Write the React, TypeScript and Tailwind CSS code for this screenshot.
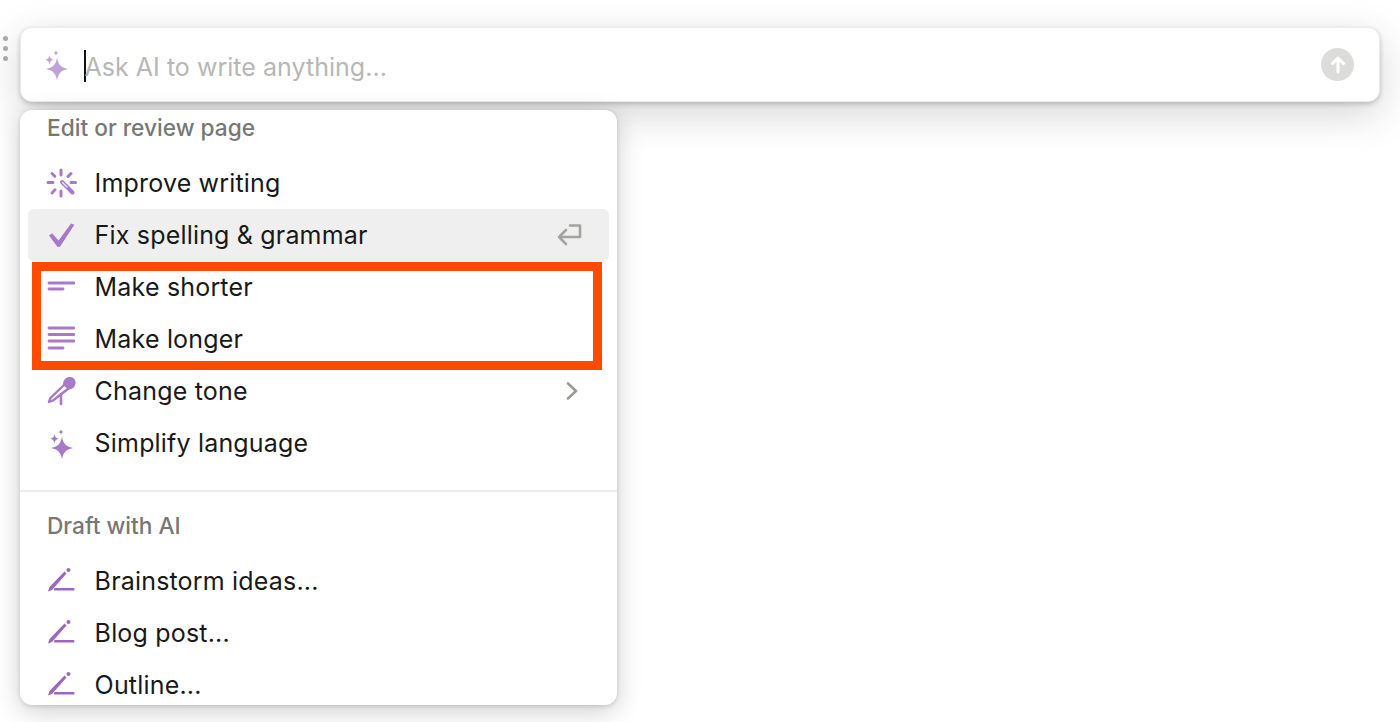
import React from 'react';

const FONT = "font-['Inter','Liberation_Sans',sans-serif]";

const Sparkles = ({ className = '' }: { className?: string }) => (
  <svg viewBox="0 0 28 28" className={`w-7 h-7 overflow-visible ${className}`} fill="currentColor">
    <path d="M15 7.5 C15.9 14 18.5 17.5 26 19 C18.5 20.5 15.9 24 15 30.5 C14.1 24 11.5 20.5 4 19 C11.5 17.5 14.1 14 15 7.5Z" />
    <path d="M7.5 5 C8 8 9 9.2 12 9.8 C9 10.4 8 11.6 7.5 14.6 C7 11.6 6 10.4 3 9.8 C6 9.2 7 8 7.5 5Z" />
    <path d="M14 0 C14.3 2 14.9 2.6 17 3 C14.9 3.4 14.3 4 14 6 C13.7 4 13.1 3.4 11 3 C13.1 2.6 13.7 2 14 0Z" />
  </svg>
);

const WandIcon = () => (
  <svg viewBox="0 0 28 28" className="w-7 h-7 overflow-visible text-[#a67ac9]" fill="none" stroke="currentColor" strokeLinecap="round">
    <path strokeWidth="3" d="M14 1v5M14 22v5M1 13.5h5M24 13.5h4.5M5 4.5l2.8 2.8M24 4.5l-3 3M5 24l3-3.2" />
    <path strokeWidth="4" d="M15 13l10.5 10.5" />
    <path strokeWidth="1.2" stroke="#f4ecf9" d="M15.5 13.5l4.5 4.5" />
  </svg>
);

const CheckIcon = () => (
  <svg viewBox="0 0 28 28" className="w-7 h-7 overflow-visible text-[#a67ac9]" fill="currentColor">
    <path d="M2 14.5 L5 12.2 L11.6 19.4 L24 2.4 L27.4 3.8 L13 25.8 L10.4 25.8Z" />
  </svg>
);

const ShortIcon = () => (
  <svg viewBox="0 0 28 28" className="w-7 h-7 text-[#a67ac9]" fill="none" stroke="currentColor" strokeWidth="2.8" strokeLinecap="round">
    <path d="M2 10h25M2 16h14" />
  </svg>
);

const LongIcon = () => (
  <svg viewBox="0 0 28 28" className="w-7 h-7 text-[#a67ac9]" fill="none" stroke="currentColor" strokeWidth="2.8" strokeLinecap="round">
    <path d="M2 3h25M2 9.5h25M2 16h25M2 23h14" />
  </svg>
);

const MicIcon = () => (
  <svg viewBox="0 0 28 28" className="w-7 h-7 overflow-visible text-[#a67ac9]" fill="none" stroke="currentColor">
    <path fill="currentColor" stroke="none" d="M16 6.5 C16.5 2 20 -0.5 23.5 0 C27 0.5 29 3.5 28.5 6.5 C28 9.5 26 12 22.5 12.5 Z" />
    <path strokeWidth="2.4" strokeLinejoin="round" d="M17.5 7.5 L21.5 11.5 L6 23.5 L2 25 L3.5 21Z" />
    <path strokeWidth="2.6" d="M14 17 V27" strokeLinecap="round" />
  </svg>
);

const PencilIcon = () => (
  <svg viewBox="0 0 28 28" className="w-7 h-7 overflow-visible text-[#9b68bd]" fill="currentColor">
    <path d="M1 24.5 L2.5 20 L17.5 4.5 L19.5 6.5 L5 23Z" />
    <circle cx="21.5" cy="3" r="2" />
    <rect x="7" y="21" width="20.5" height="2.6" rx="1.2" />
  </svg>
);

const EnterIcon = () => (
  <svg viewBox="0 0 26 22" className="w-[26px] h-[22px] text-[#a3a3a0]" fill="none" stroke="currentColor" strokeWidth="2.6" strokeLinecap="round" strokeLinejoin="round">
    <path d="M13 1.5H23V13H2M9 6L2 13L9 20" />
  </svg>
);

const ChevronIcon = () => (
  <svg viewBox="0 0 12 18" className="w-3 h-[18px] text-[#9b9a97]" fill="none" stroke="currentColor" strokeWidth="2.6" strokeLinecap="round" strokeLinejoin="round">
    <path d="M2 1.5L10 9L2 16.5" />
  </svg>
);

const Row = ({ icon, label, active, right }: { icon: React.ReactNode; label: string; active?: boolean; right?: React.ReactNode }) => (
  <div className={`h-[52px] mx-2 pl-[19px] pr-[27px] flex items-center rounded-md shrink-0 ${active ? 'bg-[#efefef]' : ''}`}>
    <span className="w-7 h-7 shrink-0 flex items-center justify-center">{icon}</span>
    <span className="ml-[19.6px] text-[25px] leading-none tracking-[0.18px] text-[#191917] flex-1">{label}</span>
    {right}
  </div>
);

const SectionLabel = ({ children }: { children: React.ReactNode }) => (
  <div className="px-[27px] text-[22.7px] leading-none font-medium text-[#787774]">{children}</div>
);

export default function App() {
  return (
    <div className={`relative h-[722px] overflow-hidden bg-white px-5 pt-[27px] ${FONT}`}>
      {/* drag handle */}
      <div className="absolute left-[2.5px] top-[36px] flex flex-col gap-[5px]">
        <span className="w-[5px] h-[5px] rounded-full bg-[#a8a8a6]" />
        <span className="w-[5px] h-[5px] rounded-full bg-[#a8a8a6]" />
        <span className="w-[5px] h-[5px] rounded-full bg-[#a8a8a6]" />
      </div>

      <div className="h-[75px] bg-white rounded-[12px] border border-[#ececeb] shadow-[0_12px_40px_rgba(0,0,0,0.17),0_2px_5px_rgba(0,0,0,0.2)] flex items-center pl-[21px] pr-[25px]">
        <Sparkles className="text-[#c0a2da] mt-[-1px]" />
        <span className="ml-[14px] mt-[3px] w-[1.5px] h-8 bg-[#111] shrink-0" />
        <span className="-ml-[1px] mt-[5px] text-[25px] leading-none tracking-[0.03px] text-[#b7b7b5] flex-1">Ask AI to write anything...</span>
        <span className="w-[33px] h-[33px] rounded-full bg-[#dcdcda] flex items-center justify-center">
          <svg viewBox="0 0 18 18" className="w-[18px] h-[18px]" fill="none" stroke="white" strokeWidth="3" strokeLinecap="round" strokeLinejoin="round">
            <path d="M9 16V2M3.5 7.5L9 2l5.5 5.5" />
          </svg>
        </span>
      </div>

      <div className="relative mt-2 w-[597px] h-[595px] bg-white rounded-[12px] overflow-hidden shadow-[0_6px_26px_rgba(0,0,0,0.2),0_1px_4px_rgba(0,0,0,0.14)] flex flex-col">
        <div className="h-[47px] pt-[7px] shrink-0">
          <SectionLabel>Edit or review page</SectionLabel>
        </div>
        <Row icon={<WandIcon />} label="Improve writing" />
        <Row icon={<CheckIcon />} label="Fix spelling & grammar" active right={<span className="-mr-px flex"><EnterIcon /></span>} />
        <Row icon={<ShortIcon />} label="Make shorter" />
        <Row icon={<LongIcon />} label="Make longer" />
        <Row icon={<MicIcon />} label="Change tone" right={<span className="mr-1 flex"><ChevronIcon /></span>} />
        <Row icon={<Sparkles className="text-[#a67ac9]" />} label="Simplify language" />
        <div className="mt-[21px] h-[2px] bg-[#ececeb] shrink-0" />
        <div className="h-[63px] pt-[23px] shrink-0">
          <SectionLabel>Draft with AI</SectionLabel>
        </div>
        <Row icon={<PencilIcon />} label="Brainstorm ideas..." />
        <Row icon={<PencilIcon />} label="Blog post..." />
        <Row icon={<PencilIcon />} label="Outline..." />
        {/* annotation box */}
        <div className="absolute left-3 top-[152px] w-[570px] h-[108px] border-[9px] border-[#ff4a00]" />
      </div>
    </div>
  );
}
